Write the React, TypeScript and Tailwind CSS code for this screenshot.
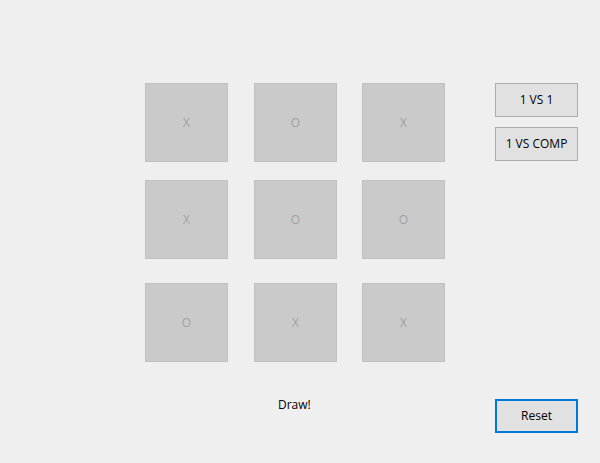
const board = [
  ["X", "O", "X"],
  ["X", "O", "O"],
  ["O", "X", "X"],
];

const rowGap = ["mb-[18px]", "mb-[24px]", ""];
const colGap = ["", "ml-[26px]", "ml-[25px]"];

function Cell({ mark, className }: { mark: string; className: string }) {
  return (
    <button
      className={`h-[79px] w-[83px] border border-[#c0c0c0] bg-[#cbcacb] text-[12px] text-[#a0a0a0] flex items-center justify-center ${className}`}
    >
      {mark}
    </button>
  );
}

function WinButton({ label, active }: { label: string; active?: boolean }) {
  return (
    <button
      className={`h-[34px] w-[83px] bg-[#e1e1e1] text-[12px] text-black ${
        active ? "border-2 border-[#0078d7]" : "border border-[#adadad]"
      }`}
    >
      {label}
    </button>
  );
}

export default function App() {
  return (
    <div
      className="h-[463px] w-[600px] bg-[#f0eff0] flex pt-[83px] pl-[145px] pb-[30px]"
      style={{ fontFamily: '"Open Sans", "Liberation Sans", sans-serif' }}
    >
      <div className="flex flex-col w-[301px]">
        {board.map((row, r) => (
          <div key={r} className={`flex ${rowGap[r]}`}>
            {row.map((mark, c) => (
              <Cell key={c} mark={mark} className={colGap[c]} />
            ))}
          </div>
        ))}
        <div className="mt-[35px] pl-[133px] text-[12px] leading-[16px] text-black">
          Draw!
        </div>
      </div>

      <div className="ml-[49px] flex flex-col gap-[10px]">
        <WinButton label="1 VS 1" />
        <WinButton label="1 VS COMP" />
        <div className="mt-auto">
          <WinButton label="Reset" active />
        </div>
      </div>
    </div>
  );
}
